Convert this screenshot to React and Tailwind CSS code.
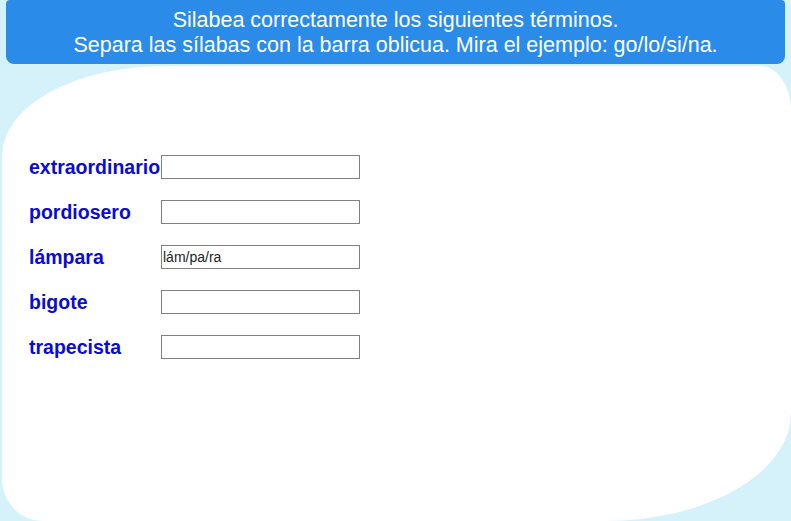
const words = [
  { label: "extraordinario", value: "" },
  { label: "pordiosero", value: "" },
  { label: "lámpara", value: "lám/pa/ra" },
  { label: "bigote", value: "" },
  { label: "trapecista", value: "" },
];

export default function App() {
  return (
    <div className="w-[791px] h-[521px] overflow-hidden flex flex-col bg-[#d5f2fb] font-['Liberation_Sans',Arial,sans-serif]">
      <header className="mx-[6px] h-[64px] shrink-0 rounded-b-lg rounded-t-sm bg-[#2a8be8] text-white text-[21.5px] leading-[25px] flex flex-col items-center justify-center text-center pt-[1px]">
        <p>Silabea correctamente los siguientes términos.</p>
        <p>Separa las sílabas con la barra oblicua. Mira el ejemplo: go/lo/si/na.</p>
      </header>

      <main className="flex-1 mt-[2px] ml-[2px] bg-white rounded-tl-[163px_90px] rounded-tr-[31px_44px] rounded-br-[186px_108px] rounded-bl-[40px_42px] pt-[89px] pl-[27px]">
        <div className="flex flex-col gap-[21px]">
          {words.map((w) => (
            <div key={w.label} className="flex items-center h-[24px]">
              <span className="w-[132px] shrink-0 pt-[2px] text-[19.5px] font-bold text-[#0b0bd2] whitespace-nowrap">
                {w.label}
              </span>
              <input
                type="text"
                defaultValue={w.value}
                className="w-[199px] h-[24px] border border-[#808080] bg-white px-[1px] text-[14px] text-[#222] outline-none font-['Liberation_Sans',Arial,sans-serif]"
              />
            </div>
          ))}
        </div>
      </main>
    </div>
  );
}
